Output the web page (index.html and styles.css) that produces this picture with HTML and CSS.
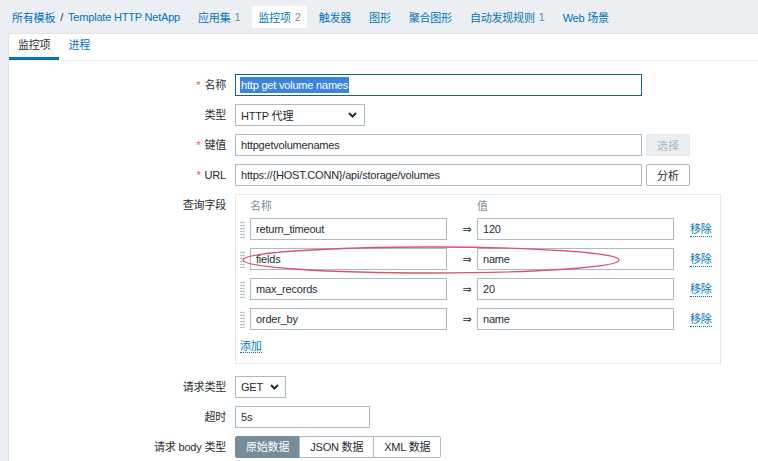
FILE: index.html
```html
<!DOCTYPE html>
<html lang="zh">
<head>
<meta charset="utf-8">
<title>监控项</title>
<link rel="stylesheet" href="styles.css">
</head>
<body>
<nav class="topnav">
  <div class="nav-item"><a href="#">所有模板</a><span class="sep">/</span><a href="#">Template HTTP NetApp</a></div>
  <div class="nav-item"><a href="#">应用集</a><span class="count">1</span></div>
  <div class="nav-item active"><a href="#">监控项</a><span class="count">2</span></div>
  <div class="nav-item"><a href="#">触发器</a></div>
  <div class="nav-item"><a href="#">图形</a></div>
  <div class="nav-item"><a href="#">聚合图形</a></div>
  <div class="nav-item"><a href="#">自动发现规则</a><span class="count">1</span></div>
  <div class="nav-item"><a href="#">Web 场景</a></div>
</nav>

<main class="panel">
  <div class="tabs">
    <a class="tab active" href="#">监控项</a>
    <a class="tab" href="#">进程</a>
  </div>

  <form class="form">
    <label class="label req">名称</label>
    <div class="input focused wide"><span class="selected">http get volume names</span></div>

    <label class="label">类型</label>
    <div class="select type-select"><span>HTTP 代理</span><svg class="chev" width="9" height="6" viewBox="0 0 9 6"><path d="M1 1 L4.5 4.5 L8 1" fill="none" stroke="#1f2c33" stroke-width="2"/></svg></div>

    <label class="label req">键值</label>
    <div class="field"><input class="input wide" value="httpgetvolumenames"><button class="btn" type="button" disabled>选择</button></div>

    <label class="label req">URL</label>
    <div class="field"><input class="input wide" value="https://{HOST.CONN}/api/storage/volumes"><button class="btn" type="button">分析</button></div>

    <label class="label">查询字段</label>
    <div class="kv">
      <div class="kv-head"><span class="kv-head-name">名称</span><span>值</span></div>
      <div class="kv-row"><span class="handle"></span><input class="input kv-in" value="return_timeout"><span class="arrow">⇒</span><input class="input kv-in" value="120"><a class="link remove" href="#">移除</a></div>
      <div class="kv-row"><span class="handle"></span><input class="input kv-in" value="fields"><span class="arrow">⇒</span><input class="input kv-in" value="name"><a class="link remove" href="#">移除</a></div>
      <div class="kv-row"><span class="handle"></span><input class="input kv-in" value="max_records"><span class="arrow">⇒</span><input class="input kv-in" value="20"><a class="link remove" href="#">移除</a></div>
      <div class="kv-row"><span class="handle"></span><input class="input kv-in" value="order_by"><span class="arrow">⇒</span><input class="input kv-in" value="name"><a class="link remove" href="#">移除</a></div>
      <div class="kv-add"><a class="link" href="#">添加</a></div>
    </div>

    <label class="label">请求类型</label>
    <div class="select method-select"><span>GET</span><svg class="chev" width="9" height="6" viewBox="0 0 9 6"><path d="M1 1 L4.5 4.5 L8 1" fill="none" stroke="#1f2c33" stroke-width="2"/></svg></div>

    <label class="label">超时</label>
    <input class="input timeout" value="5s">

    <label class="label">请求 body 类型</label>
    <div class="seg">
      <span class="seg-btn active">原始数据</span>
      <span class="seg-btn">JSON 数据</span>
      <span class="seg-btn">XML 数据</span>
    </div>
  </form>
</main>

<svg class="annot" width="382" height="30" viewBox="0 0 382 30">
  <ellipse cx="190" cy="15" rx="188" ry="13" fill="none" stroke="#d6566b" stroke-width="1.4"/>
</svg>
</body>
</html>
```

FILE: styles.css
```css
html, body {
  margin: 0;
  padding: 0;
}
body {
  background: #ebeef2;
  font: 11px "Liberation Sans", Arial, "Noto Sans CJK SC", sans-serif;
  letter-spacing: -0.2px;
  color: #1f2c33;
  position: relative;
  height: 461px;
  overflow: hidden;
}
a {
  text-decoration: none;
  color: #0275b8;
}

/* top navigation */
.topnav {
  display: flex;
  align-items: center;
  height: 33px;
  padding-left: 6px;
  gap: 6px;
}
.nav-item {
  display: flex;
  align-items: center;
  height: 22px;
  padding: 0 6px;
  white-space: nowrap;
}
.nav-item.active {
  background: #fff;
}
.sep {
  margin: 0 5px;
  color: #1f2c33;
}
.count {
  color: #768d99;
  margin-left: 4px;
}

/* panel */
.panel {
  margin-left: 8px;
  background: #fff;
  border-top: 1px solid #dfe4e7;
  border-left: 1px solid #dfe4e7;
  border-top-left-radius: 2px;
  height: 427px;
}
.tabs {
  display: flex;
  height: 26px;
  border-bottom: 1px solid #ebeef2;
}
.tab {
  padding: 0 9px;
  line-height: 23px;
  border-bottom: 3px solid transparent;
}
.tab.active {
  color: #1f2c33;
  border-bottom-color: #0275b8;
}

/* form */
.form {
  display: grid;
  grid-template-columns: 217px auto;
  column-gap: 9px;
  row-gap: 8px;
  padding-top: 13px;
  justify-items: start;
  align-items: start;
}
.label {
  justify-self: end;
  line-height: 22px;
  white-space: nowrap;
}
.req::before {
  content: "*";
  color: #e45959;
  margin-right: 4px;
}
.input {
  box-sizing: border-box;
  height: 22px;
  border: 1px solid #acbbc2;
  background: #fff;
  padding: 0 5px;
  font: inherit;
  letter-spacing: inherit;
  color: inherit;
  margin: 0;
  outline: none;
}
.wide {
  width: 407px;
}
.focused {
  border-color: #1c5f86;
  display: flex;
  align-items: center;
  padding-left: 4px;
}
.selected {
  background: #3b84d9;
  color: #fff;
  line-height: 16px;
  padding: 0 1px;
}
.field {
  display: flex;
}
.btn {
  box-sizing: border-box;
  width: 44px;
  height: 22px;
  margin-left: 4px;
  border: 1px solid #acbbc2;
  border-radius: 2px;
  background: #fff;
  font: inherit;
  color: #1f2c33;
  padding: 0;
}
.btn:disabled {
  background: #ebeef2;
  border-color: #e3e7ea;
  color: #acbbc2;
}

/* select */
.select {
  box-sizing: border-box;
  height: 22px;
  border: 1px solid #acbbc2;
  background: #fff;
  display: flex;
  align-items: center;
  justify-content: space-between;
  padding: 0 7px 0 5px;
}
.type-select {
  width: 130px;
}
.method-select {
  width: 51px;
  padding-right: 6px;
}
.chev {
  display: block;
}

/* key/value box */
.kv {
  box-sizing: border-box;
  width: 486px;
  border: 1px solid #e4e8eb;
  padding: 3px 4px 9px 4px;
  margin-bottom: 4px;
}
.kv-head {
  display: flex;
  height: 16px;
  line-height: 16px;
  margin-bottom: 4px;
  padding-left: 10px;
  color: #768d99;
}
.kv-head-name {
  width: 227px;
}
.kv-row {
  display: flex;
  align-items: center;
  height: 22px;
  margin-bottom: 8px;
  white-space: nowrap;
}
.handle {
  flex: none;
  width: 5px;
  height: 17px;
  margin-right: 5px;
  background-image: radial-gradient(circle, #b9c4ca 0.9px, transparent 1.1px);
  background-size: 2.5px 3px;
}
.kv-in {
  flex: none;
  width: 197px;
}
.arrow {
  flex: none;
  width: 30px;
  box-sizing: border-box;
  padding-left: 10px;
  text-align: center;
  font-family: "DejaVu Sans", sans-serif;
  font-size: 11px;
  letter-spacing: 0;
}
.link {
  border-bottom: 1px dotted #0275b8;
  line-height: 14px;
}
.remove {
  flex: none;
  margin-left: 16px;
}
.kv-add {
  height: 16px;
  line-height: 16px;
}

.timeout {
  width: 135px;
}

/* segmented */
.seg {
  display: flex;
}
.seg-btn {
  box-sizing: border-box;
  height: 22px;
  line-height: 20px;
  padding: 0 10px;
  border: 1px solid #acbbc2;
  background: #fff;
  margin-left: -1px;
}
.seg-btn:first-child {
  margin-left: 0;
  border-radius: 2px 0 0 2px;
}
.seg-btn:last-child {
  border-radius: 0 2px 2px 0;
}
.seg-btn.active {
  background: #768d99;
  border-color: #768d99;
  color: #fff;
}

/* annotation */
.annot {
  position: absolute;
  left: 241px;
  top: 245px;
  pointer-events: none;
}
```
